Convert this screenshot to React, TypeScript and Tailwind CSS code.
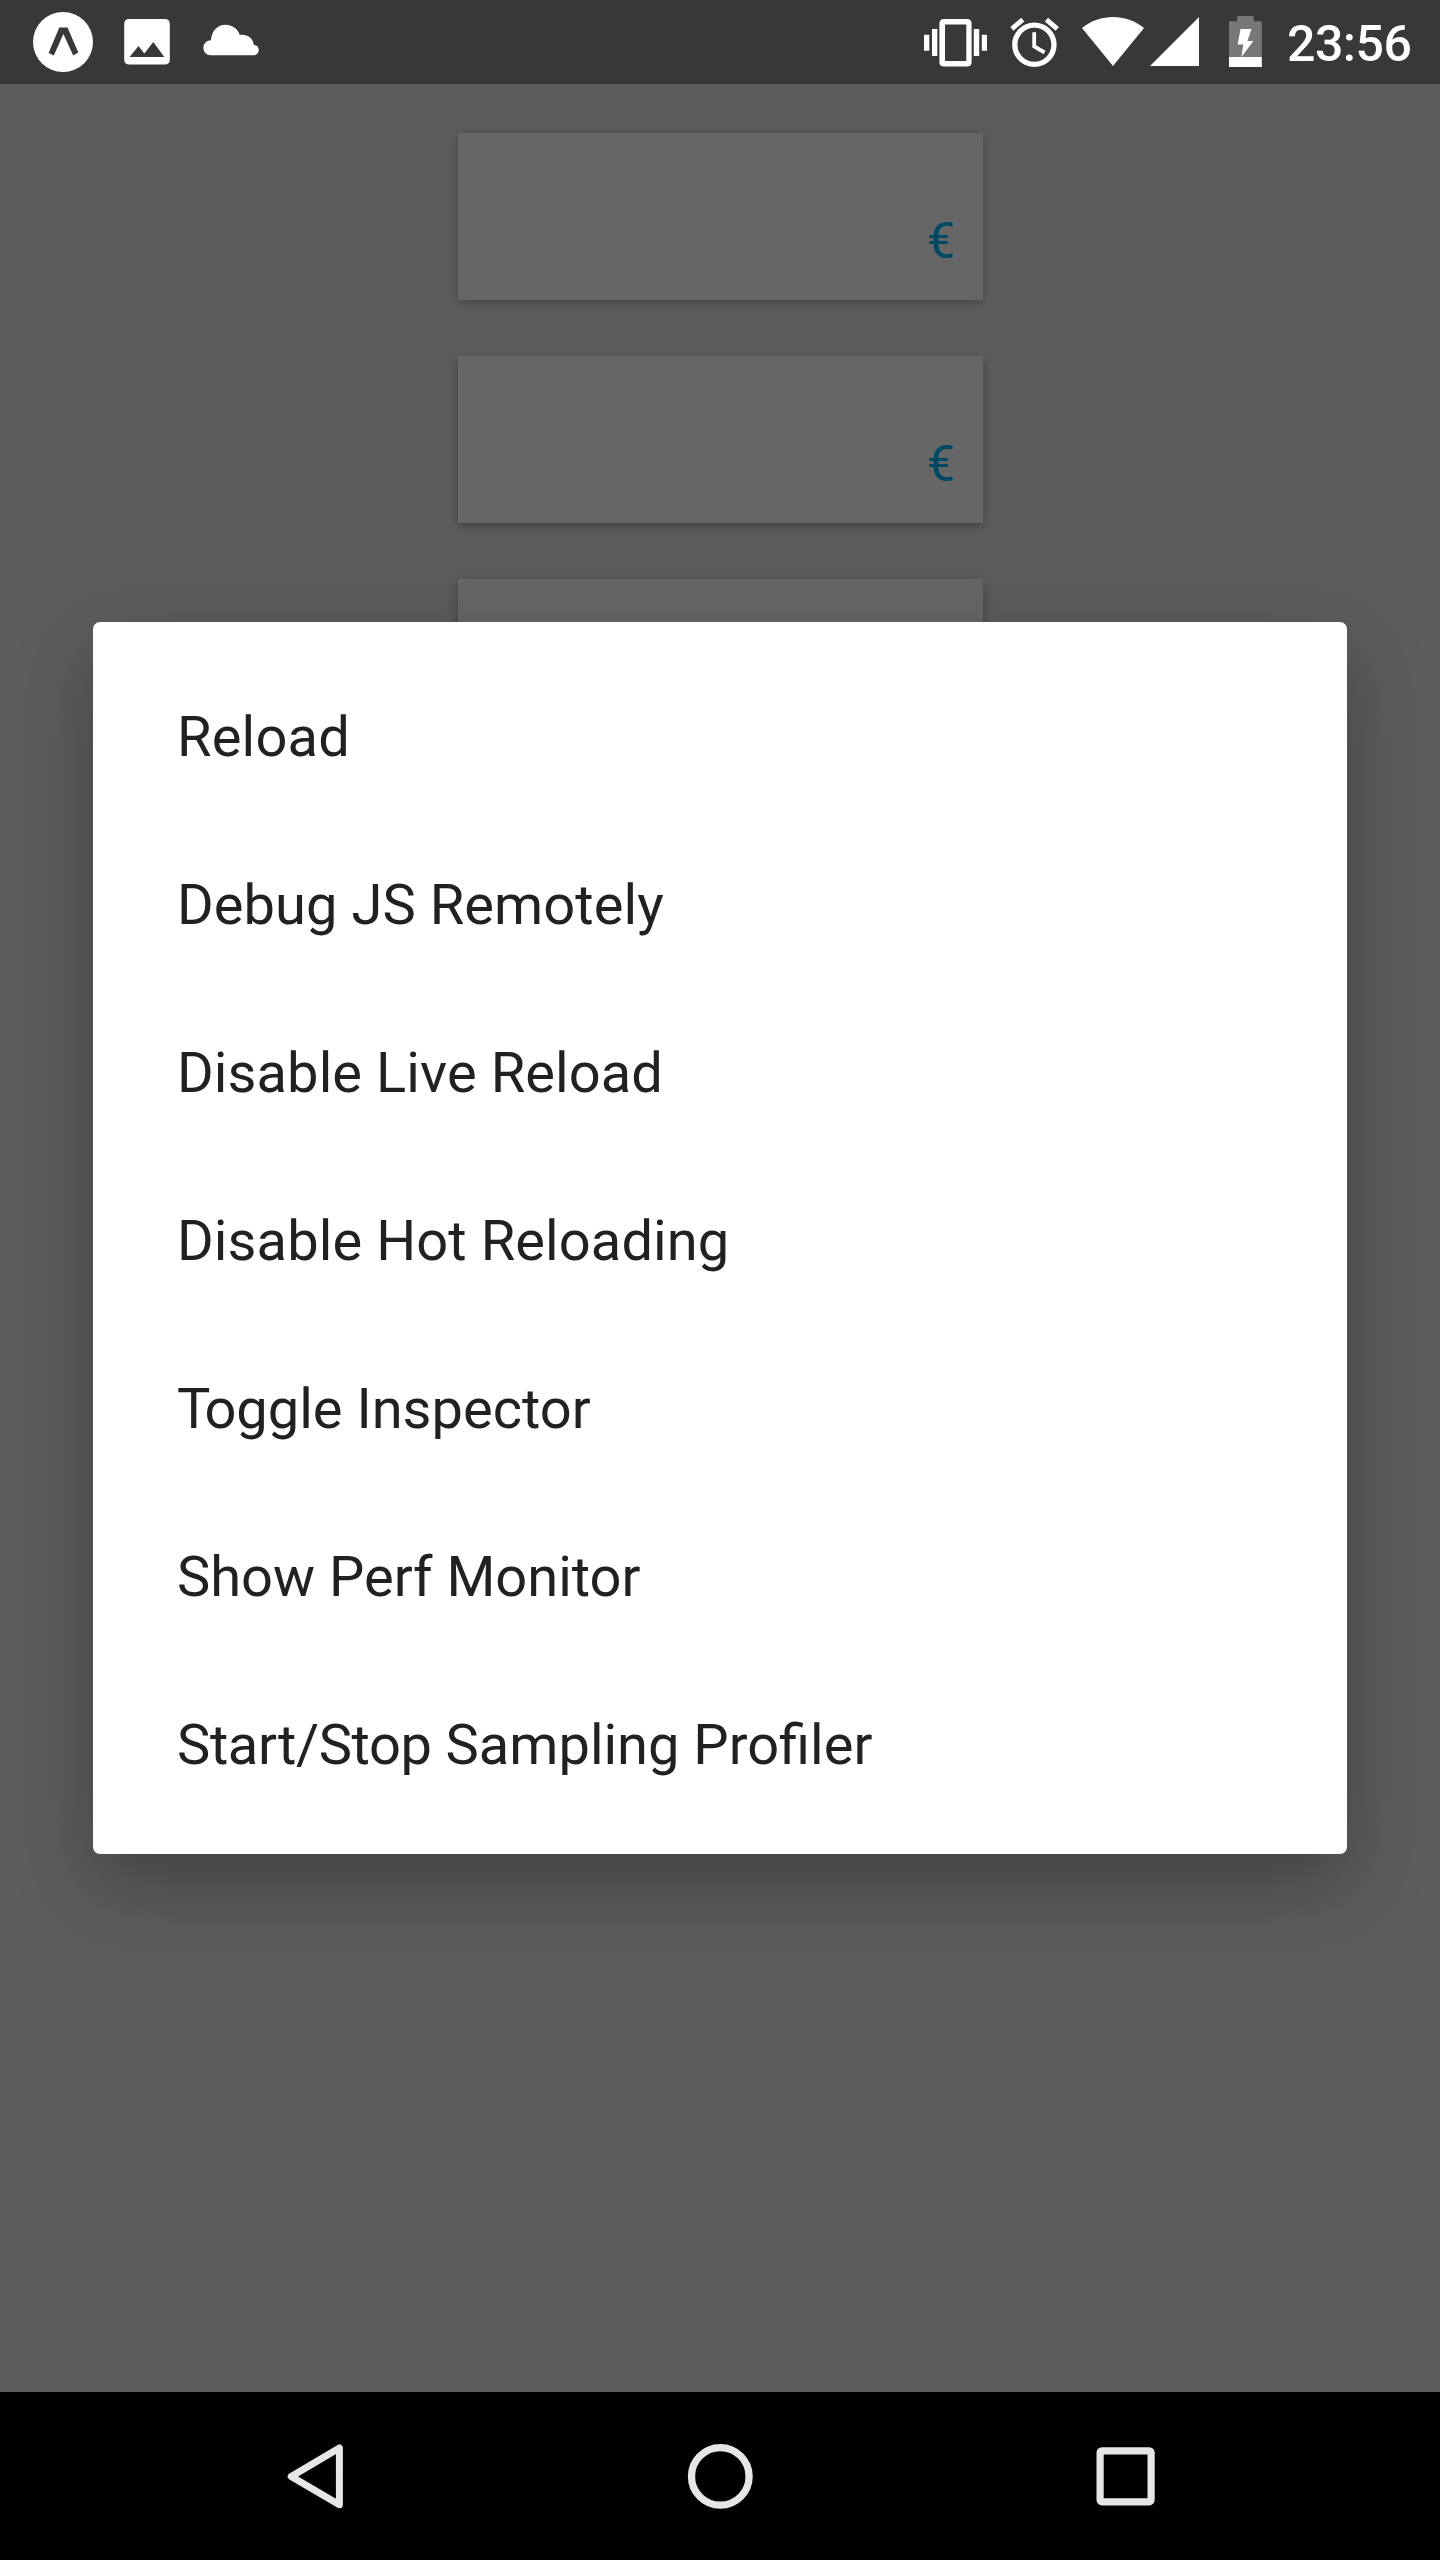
import type { ReactNode } from "react";

const MENU_ITEMS: { key: string; label: ReactNode; spacing: string }[] = [
  { key: "reload", label: "Reload", spacing: "tracking-[0.2px]" },
  { key: "debug", label: "Debug JS Remotely", spacing: "tracking-[0.07px]" },
  { key: "live", label: "Disable Live Reload", spacing: "tracking-[0.09px]" },
  { key: "hot", label: "Disable Hot Reloading", spacing: "tracking-[0.1px]" },
  {
    key: "inspector",
    label: (
      <>
        <span className="tracking-[-6px]">T</span>oggle Inspector
      </>
    ),
    spacing: "tracking-normal",
  },
  { key: "perf", label: "Show Perf Monitor", spacing: "tracking-normal" },
  {
    key: "profiler",
    label: (
      <>
        <span className="tracking-[-0.35px]">Start/Stop</span> Sampling Profiler
      </>
    ),
    spacing: "tracking-normal",
  },
];

function StatusIcon({ width, children }: { width: number; children: ReactNode }) {
  return (
    <svg width={width} height={84} viewBox={`0 0 ${width} 84`} fill="#fff" className="block shrink-0">
      {children}
    </svg>
  );
}

function ExpoIcon() {
  return (
    <StatusIcon width={60}>
      <circle cx="30" cy="42" r="30" />
      <path d="M26.3 27.5H34.5L45.3 52.5L40.2 55.6L30.4 34L20.8 55.6L15.6 53Z" fill="#383838" />
    </StatusIcon>
  );
}

function PhotoIcon() {
  return (
    <StatusIcon width={46}>
      <path
        fillRule="evenodd"
        d="M5.3 19H40.7Q45.8 19 45.8 24.1V59.5Q45.8 64.6 40.7 64.6H5.3Q.2 64.6 .2 59.5V24.1Q.2 19 5.3 19ZM5.6 57H40.3L29.3 42L20.3 53.4L14.5 46Z"
      />
    </StatusIcon>
  );
}

function CloudIcon() {
  return (
    <StatusIcon width={56}>
      <path d="M7.5 55.3A7.3 7.3 0 0 1 .4 47.6A7.4 7.4 0 0 1 8 40.3C8.5 31 14.5 24.8 22.5 24.8C29 24.8 34.5 28.5 36.8 34.9C43.6 33.8 50.2 37.5 50.8 45C54 45.2 55.8 47.3 55.8 50C55.8 53 53.5 55.3 50.2 55.3Z" />
    </StatusIcon>
  );
}

function VibrateIcon() {
  return (
    <StatusIcon width={63}>
      <path d="M0 34.7H5.3V50.7H0ZM8 29H13.3V56H8ZM49.8 29H55.2V56H49.8ZM57.8 34.7H63V50.7H57.8Z" />
      <path
        fillRule="evenodd"
        d="M20 19H43Q47.6 19 47.6 23.6V62Q47.6 66.6 43 66.6H20Q15.4 66.6 15.4 62V23.6Q15.4 19 20 19ZM21 24.6V61H42.3V24.6Z"
      />
    </StatusIcon>
  );
}

function AlarmIcon() {
  return (
    <StatusIcon width={50}>
      <circle cx="24.4" cy="44.7" r="19.6" fill="none" stroke="#fff" strokeWidth="5.3" />
      <path d="M0.3 27L11.2 17.8L14.3 21.4L3.4 30.7ZM38 17.8L48.9 27L45.7 30.7L34.8 21.4Z" />
      <path d="M24.2 32.3V46.3L34.6 52.5" fill="none" stroke="#fff" strokeWidth="3.8" />
    </StatusIcon>
  );
}

function WifiIcon() {
  return (
    <StatusIcon width={62}>
      <path d="M0 28C18 13.4 44 13.4 62 28L31 66Z" />
    </StatusIcon>
  );
}

function SignalIcon() {
  return (
    <StatusIcon width={49}>
      <path d="M0 66L49 17V66Z" />
    </StatusIcon>
  );
}

function BatteryIcon() {
  return (
    <StatusIcon width={33}>
      <path d="M8.2 16H24.8V21.2H32.8V57H0V21.2H8.2Z" fill="#777" />
      <path d="M0 57H32.8V67H0Z" />
      <path d="M11.5 29H22.5L18.5 41H24.3L12.3 57.3L14.3 44.5H8.7Z" />
    </StatusIcon>
  );
}

function StatusBar() {
  return (
    <header className="flex h-[84px] items-start bg-[#383838] pl-[33px]">
      <div className="flex gap-[32px]">
        <ExpoIcon />
        <div className="-ml-px flex gap-[33px]">
          <PhotoIcon />
          <CloudIcon />
        </div>
      </div>
      <div className="ml-auto flex pr-[28px]">
        <VibrateIcon />
        <div className="ml-[23px] flex">
          <AlarmIcon />
        </div>
        <div className="ml-[22px] flex gap-[6px]">
          <WifiIcon />
          <SignalIcon />
        </div>
        <div className="ml-[30px] flex">
          <BatteryIcon />
        </div>
        <span className="ml-[25px] w-[125px] whitespace-nowrap pt-[2px] text-[50px] font-medium leading-[84px] tracking-[-0.5px] text-white">
          23:56
        </span>
      </div>
    </header>
  );
}

function AmountCard({ shadow }: { shadow: string }) {
  return (
    <div className={`flex h-[167px] w-[525px] items-end justify-end bg-[#666] pb-[30px] pr-[28px] ${shadow}`}>
      <span className="text-[50px] leading-[57px] text-[#004966]">€</span>
    </div>
  );
}

function DevMenu() {
  return (
    <ul className="absolute left-[93px] top-[622px] h-[1232px] w-[1254px] rounded-[7px] bg-white py-[28px] shadow-[0_30px_80px_rgba(0,0,0,0.3)]">
      {MENU_ITEMS.map((item) => (
        <li key={item.key} className="flex h-[168px] items-center pl-[84px] pt-[6px] text-[56px] leading-[66px] text-[#212121]">
          <span className={`whitespace-nowrap ${item.spacing}`}>{item.label}</span>
        </li>
      ))}
    </ul>
  );
}

function NavigationBar() {
  return (
    <nav className="relative flex h-[168px] items-center justify-center bg-black">
      <button className="flex w-[405px] justify-center" aria-label="Back">
        <svg width="70" height="70" viewBox="0 0 70 70" fill="none">
          <path d="M11.2 35.4L59.4 7V63.8Z" stroke="#e6e6e6" strokeWidth="7" strokeLinejoin="round" />
        </svg>
      </button>
      <button className="flex w-[405px] justify-center" aria-label="Home">
        <svg width="70" height="70" viewBox="0 0 70 70" fill="none">
          <circle cx="35.3" cy="35.4" r="28.8" stroke="#e6e6e6" strokeWidth="7.3" />
        </svg>
      </button>
      <button className="flex w-[405px] justify-center" aria-label="Recent apps">
        <svg width="70" height="70" viewBox="0 0 70 70" fill="none">
          <rect x="10.1" y="9.8" width="51" height="51" rx="1.8" stroke="#e6e6e6" strokeWidth="7.2" />
        </svg>
      </button>
    </nav>
  );
}

export default function App() {
  return (
    <div className="relative flex h-[2560px] w-[1440px] flex-col overflow-hidden bg-[#5d5d5d] font-['Roboto',sans-serif]">
      <StatusBar />
      <main className="flex flex-1 flex-col items-start gap-[56px] pl-[458px] pt-[49px]">
        <AmountCard shadow="shadow-[0_2px_9px_rgba(0,0,0,0.3)]" />
        <AmountCard shadow="shadow-[0_3px_10px_rgba(0,0,0,0.32)]" />
        <AmountCard shadow="shadow-[0_4px_11px_rgba(0,0,0,0.32)]" />
      </main>
      <DevMenu />
      <NavigationBar />
    </div>
  );
}
